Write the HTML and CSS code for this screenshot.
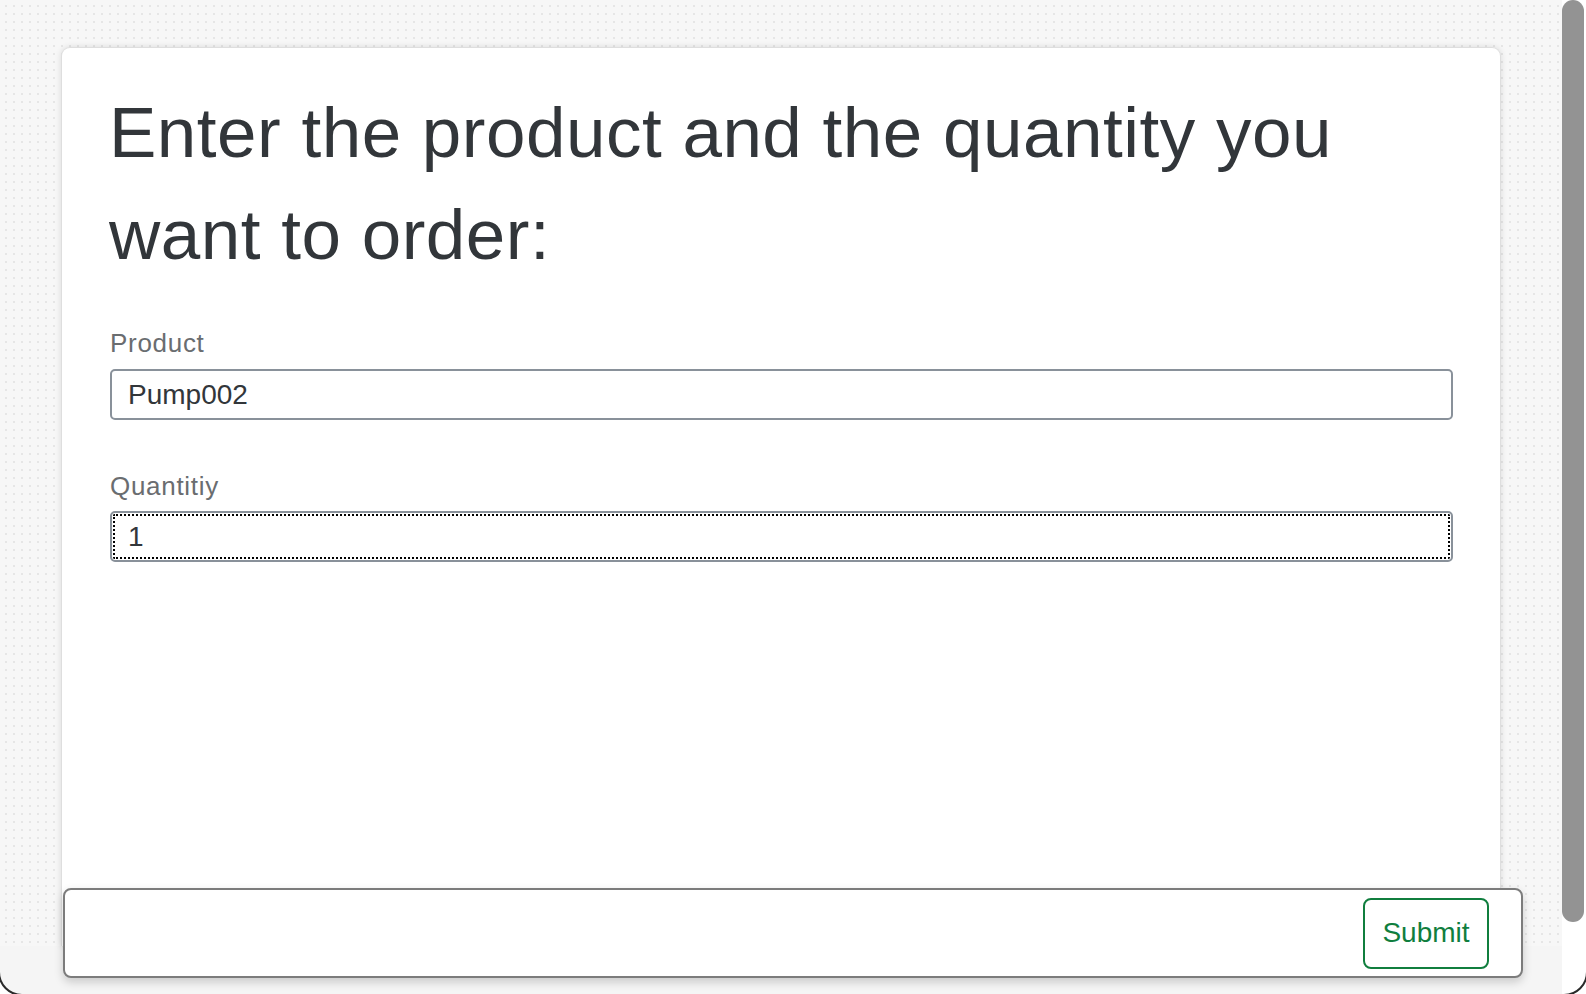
FILE: index.html
```html
<!DOCTYPE html>
<html lang="en">
<head>
<meta charset="utf-8">
<title>Order</title>
<link rel="stylesheet" href="styles.css">
</head>
<body>
  <div class="page">
    <section class="card">
      <h1 class="title">Enter the product and the quantity you want to order:</h1>
      <div class="field field-first">
        <label class="label" for="product">Product</label>
        <input class="input" id="product" type="text" value="Pump002">
      </div>
      <div class="field field-second">
        <label class="label" for="qty">Quantitiy</label>
        <input class="input input-focused" id="qty" type="text" value="1">
      </div>
    </section>
  </div>
  <footer class="toolbar">
    <button class="btn" type="button">Submit</button>
  </footer>
  <div class="scrollbar"><div class="thumb"></div></div>
  <div class="frame"></div>
</body>
</html>
```
FILE: styles.css
```css
* { box-sizing: border-box; }
html, body {
  margin: 0;
  height: 100%;
  overflow: hidden;
}
body {
  font-family: "Liberation Sans", Arial, sans-serif;
  background-color: #f5f5f5;
}
.page {
  height: 946px;
  padding: 47px 85px 0 61px;
  background-color: #f7f7f7;
  background-image: radial-gradient(circle, #e6e6e6 0.9px, transparent 1.2px);
  background-size: 8px 8px;
  background-position: 2px 2px;
}
.card {
  height: 100%;
  background: #ffffff;
  border: 1px solid #dedede;
  border-bottom: none;
  border-radius: 9px 9px 0 0;
  box-shadow: 0 0 6px rgba(0, 0, 0, 0.12);
  padding: 34px 48px 0 47px;
}
.title {
  margin: 0;
  font-weight: 400;
  font-size: 71px;
  line-height: 102px;
  color: #32363a;
  letter-spacing: 0.5px;
}
.field { display: flex; flex-direction: column; }
.field-first { margin-top: 41px; }
.field-second { margin-top: 50px; }
.label {
  font-size: 26px;
  line-height: 32px;
  color: #6a6d70;
  margin-bottom: 10px;
  padding-left: 1px;
  letter-spacing: 0.7px;
}
.field-second .label { margin-bottom: 9px; }
.input {
  width: 100%;
  height: 51px;
  margin-left: 1px;
  border: 2px solid #89919a;
  border-radius: 5px;
  background: #fff;
  padding: 0 16px;
  font-family: "Liberation Sans", Arial, sans-serif;
  font-size: 28px;
  color: #32363a;
  outline: none;
}
.input-focused {
  outline: 2px dotted #000;
  outline-offset: -5px;
}
.toolbar {
  position: fixed;
  left: 63px;
  bottom: 16px;
  width: 1460px;
  height: 90px;
  background: #fff;
  border: 2px solid #7c7c7c;
  border-radius: 8px;
  box-shadow: 0 4px 10px rgba(0, 0, 0, 0.18);
  display: flex;
  justify-content: flex-end;
  align-items: center;
  padding: 0 32px 0 0;
}
.btn {
  width: 126px;
  height: 71px;
  border: 2px solid #107e3e;
  border-radius: 8px;
  background: #fff;
  color: #107e3e;
  font-family: "Liberation Sans", Arial, sans-serif;
  font-size: 28px;
  padding: 0;
}
.scrollbar {
  position: fixed;
  top: 0;
  right: 0;
  width: 24px;
  height: 100%;
  background: #ffffff;
}
.thumb {
  width: 22px;
  height: 922px;
  background: #939393;
  border-radius: 11px;
}
.frame {
  position: fixed;
  left: -2px;
  right: -2px;
  top: -60px;
  bottom: -2px;
  border: 2px solid #2a2a2a;
  border-radius: 24px;
  box-shadow: 0 0 0 40px #ffffff;
  pointer-events: none;
}
```
